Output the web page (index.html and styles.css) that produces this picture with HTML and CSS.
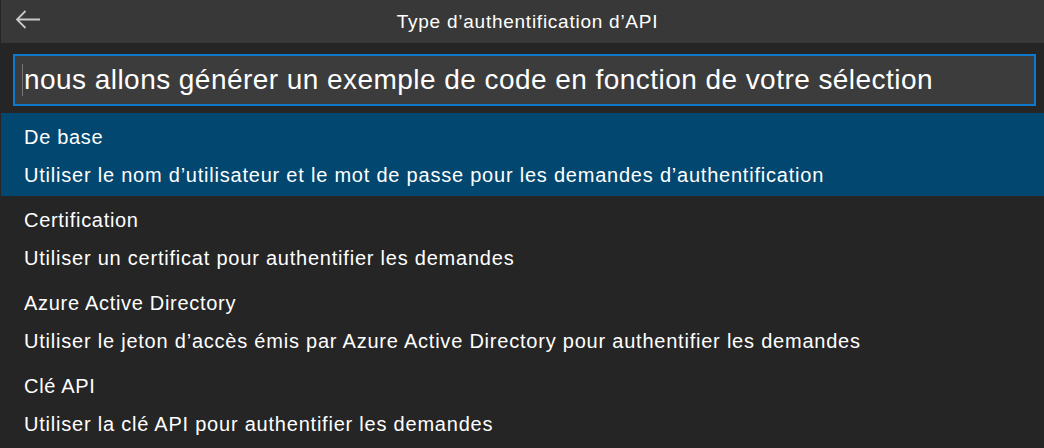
FILE: index.html
```html
<!DOCTYPE html>
<html lang="fr">
<head>
<meta charset="utf-8">
<link rel="stylesheet" href="styles.css">
</head>
<body>
<div class="panel">
  <header class="titlebar">
    <span class="back">
      <svg width="26" height="22" viewBox="0 0 26 22"><path d="M25 10.5H2M10.5 2L2 10.5l8.5 8.5" fill="none" stroke="#c8c8c8" stroke-width="1.8"/></svg>
    </span>
    <span class="title">Type d’authentification d’API</span>
  </header>
  <div class="inputwrap">
    <div class="input"><span class="caret"></span>nous allons générer un exemple de code en fonction de votre sélection</div>
  </div>
  <ul class="list">
    <li class="item selected">
      <div class="label">De base</div>
      <div class="desc">Utiliser le nom d’utilisateur et le mot de passe pour les demandes d’authentification</div>
    </li>
    <li class="item">
      <div class="label">Certification</div>
      <div class="desc">Utiliser un certificat pour authentifier les demandes</div>
    </li>
    <li class="item">
      <div class="label">Azure Active Directory</div>
      <div class="desc">Utiliser le jeton d’accès émis par Azure Active Directory pour authentifier les demandes</div>
    </li>
    <li class="item">
      <div class="label">Clé API</div>
      <div class="desc">Utiliser la clé API pour authentifier les demandes</div>
    </li>
  </ul>
</div>
</body>
</html>
```
FILE: styles.css
```css
html, body {
  margin: 0;
  padding: 0;
  background: #252526;
}
body {
  font-family: "Liberation Sans", Arial, sans-serif;
  color: #ffffff;
  width: 1044px;
  height: 448px;
  overflow: hidden;
}
.panel {
  display: flex;
  flex-direction: column;
  border-left: 1px solid #262626;
}
.titlebar {
  height: 43px;
  background: #383838;
  display: flex;
  align-items: center;
  justify-content: center;
  position: relative;
}
.back {
  position: absolute;
  left: 14px;
  top: 9px;
  display: flex;
}
.title {
  font-size: 19px;
  letter-spacing: 0.75px;
  color: #ffffff;
  margin-left: 10px;
}
.inputwrap {
  padding: 11px 8px 7px 12px;
}
.input {
  height: 48px;
  border: 2px solid #0e79cd;
  background: #3c3c3c;
  display: flex;
  align-items: center;
  font-size: 28px;
  letter-spacing: 0.45px;
  padding-left: 8px;
  color: #ffffff;
}
.caret {
  width: 1px;
  height: 32px;
  background: #777;
  margin-right: 1px;
  margin-left: -1px;
}
.list {
  list-style: none;
  margin: 0;
  padding: 0;
}
.item {
  height: 83px;
  box-sizing: border-box;
  padding-top: 13px;
  padding-left: 23px;
  display: flex;
  flex-direction: column;
  gap: 16px;
}
.item.selected {
  background: #02476f;
}
.label {
  font-size: 20px;
  letter-spacing: 0.7px;
  line-height: 22px;
}
.desc {
  font-size: 20px;
  letter-spacing: 0.78px;
  line-height: 22px;
}
```
